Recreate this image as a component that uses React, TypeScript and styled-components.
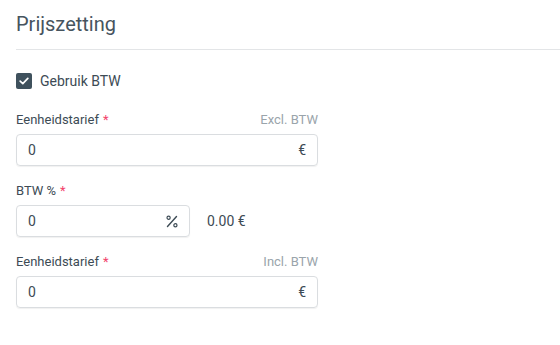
import React from "react";
import styled, { createGlobalStyle } from "styled-components";

const GlobalStyle = createGlobalStyle`
  html, body { margin: 0; padding: 0; background: #fff; }
  body { font-family: Roboto, "Liberation Sans", sans-serif; color: #3d4b55; }
  * { box-sizing: border-box; }
`;

const Page = styled.div`
  width: 560px;
  padding-left: 16px;
`;

const Header = styled.div`
  padding: 12px 0 13px;
  border-bottom: 1px solid #e3e5e7;
`;

const Title = styled.h2`
  margin: 0;
  font-size: 20px;
  line-height: 24px;
  font-weight: 400;
  color: #46545e;
`;

const Body = styled.div`
  display: flex;
  flex-direction: column;
  padding-top: 23px;
`;

const CheckRow = styled.label`
  display: flex;
  align-items: center;
  gap: 8px;
  font-size: 14px;
  line-height: 16px;
  color: #3d4b55;
  margin-bottom: 23px;
`;

const CheckBox = styled.span`
  width: 16px;
  height: 16px;
  border-radius: 2px;
  background: #3f515d;
  display: flex;
  align-items: center;
  justify-content: center;
`;

const Field = styled.div<{ $width: number }>`
  display: flex;
  flex-direction: column;
  gap: 6px;
  width: ${(p) => p.$width}px;
  margin-bottom: 17px;
`;

const LabelRow = styled.div`
  display: flex;
  justify-content: space-between;
  font-size: 13px;
  line-height: 16px;
`;

const Label = styled.span`
  color: #3d4b55;
`;

const Required = styled.span`
  color: #f2426b;
  margin-left: 4px;
`;

const Hint = styled.span`
  color: #9aa4ab;
`;

const InputRow = styled.div`
  display: flex;
  align-items: center;
  gap: 17px;
`;

const InputBox = styled.div<{ $width: number }>`
  width: ${(p) => p.$width}px;
  height: 32px;
  border: 1px solid #dadde0;
  border-radius: 4px;
  box-shadow: 0 1px 1px rgba(0, 0, 0, 0.06);
  display: flex;
  align-items: center;
  justify-content: space-between;
  padding: 0 11px 0 11px;
  font-size: 14px;
  color: #3d4b55;
`;

const Suffix = styled.span`
  font-size: 14px;
  color: #3d4b55;
  display: flex;
  align-items: center;
`;

const Computed = styled.span`
  font-size: 14px;
  color: #3d4b55;
`;

const Check = () => (
  <svg width="10" height="8" viewBox="0 0 10 8">
    <path d="M1.2 4.2 L3.8 6.6 L8.8 1.4" fill="none" stroke="#fff" strokeWidth="1.7" strokeLinecap="round" strokeLinejoin="round" />
  </svg>
);

const Percent = () => (
  <svg width="12" height="13" viewBox="0 0 12 13">
    <path d="M1.5 11.5 L10.5 1.5" stroke="#3d4b55" strokeWidth="1.4" strokeLinecap="round" />
    <circle cx="2.6" cy="2.8" r="1.6" fill="none" stroke="#3d4b55" strokeWidth="1.2" />
    <circle cx="9.4" cy="10.2" r="1.6" fill="none" stroke="#3d4b55" strokeWidth="1.2" />
  </svg>
);

export default function App() {
  return (
    <>
      <GlobalStyle />
      <Page>
        <Header>
          <Title>Prijszetting</Title>
        </Header>
        <Body>
          <CheckRow>
            <CheckBox>
              <Check />
            </CheckBox>
            Gebruik BTW
          </CheckRow>

          <Field $width={302}>
            <LabelRow>
              <Label>
                Eenheidstarief<Required>*</Required>
              </Label>
              <Hint>Excl. BTW</Hint>
            </LabelRow>
            <InputRow>
              <InputBox $width={302}>
                <span>0</span>
                <Suffix>€</Suffix>
              </InputBox>
            </InputRow>
          </Field>

          <Field $width={302}>
            <LabelRow>
              <Label>
                BTW %<Required>*</Required>
              </Label>
            </LabelRow>
            <InputRow>
              <InputBox $width={174}>
                <span>0</span>
                <Suffix>
                  <Percent />
                </Suffix>
              </InputBox>
              <Computed>0.00 €</Computed>
            </InputRow>
          </Field>

          <Field $width={302}>
            <LabelRow>
              <Label>
                Eenheidstarief<Required>*</Required>
              </Label>
              <Hint>Incl. BTW</Hint>
            </LabelRow>
            <InputRow>
              <InputBox $width={302}>
                <span>0</span>
                <Suffix>€</Suffix>
              </InputBox>
            </InputRow>
          </Field>
        </Body>
      </Page>
    </>
  );
}
